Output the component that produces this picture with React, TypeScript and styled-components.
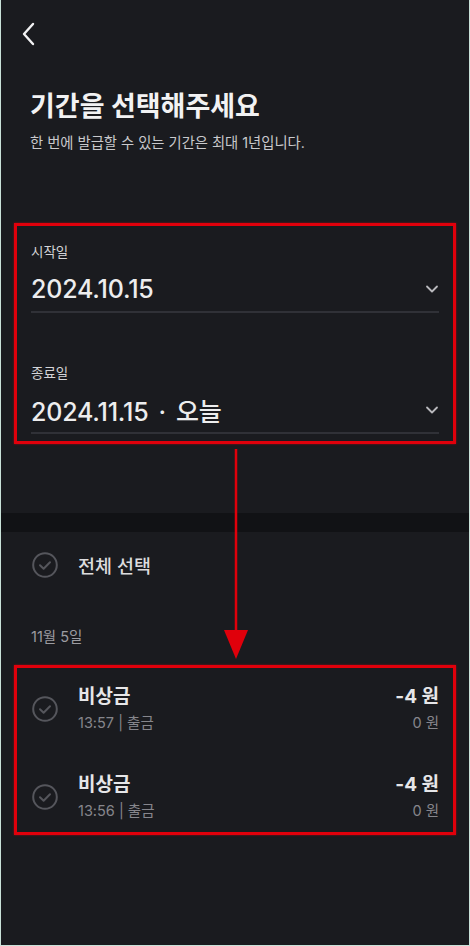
import React from 'react';
import styled, { createGlobalStyle } from 'styled-components';

const GlobalStyle = createGlobalStyle`
  html, body {
    margin: 0;
    padding: 0;
    background: #1a1b1f;
  }
  * {
    box-sizing: border-box;
  }
`;

const Screen = styled.div`
  position: relative;
  width: 470px;
  height: 946px;
  overflow: hidden;
  background: #1a1b1f;
  border-left: 1px solid #c9e2d9;
  border-right: 1px solid #c9e2d9;
  border-bottom: 1px solid #c9e2d9;
  font-family: Inter, 'Noto Sans CJK KR', 'Noto Sans', sans-serif;
  color: #ededee;
`;

const Header = styled.div`
  height: 70px;
  display: flex;
  align-items: center;
  padding-left: 17px;
  padding-bottom: 2px;
`;

const Intro = styled.div`
  padding: 22px 29px 0;
`;

const Title = styled.h1`
  margin: 0;
  font-size: 27px;
  line-height: 30px;
  font-weight: 700;
  color: #f2f2f3;
`;

const Subtitle = styled.p`
  margin: 12px 0 0;
  font-size: 14.3px;
  line-height: 18px;
  color: #c9c9cc;
`;

const Highlight = styled.div<{ $top: number }>`
  margin: ${({ $top }) => $top}px 13px 0;
  border: 3px solid #e0000b;
  box-shadow: 0 0 2px rgba(224, 0, 11, 0.6);
`;

const DateFields = styled.div`
  display: flex;
  flex-direction: column;
  gap: 51px;
  padding: 17px 14px 7px;
`;

const Field = styled.div`
  display: flex;
  flex-direction: column;
`;

const FieldLabel = styled.span`
  font-size: 13.5px;
  line-height: 18px;
  color: #d4d4d7;
`;

const FieldValue = styled.div`
  margin-top: 12px;
  height: 32px;
  display: flex;
  align-items: center;
  justify-content: space-between;
  font-size: 25px;
  font-weight: 500;
  letter-spacing: -0.2px;
  color: #ededee;
`;

const Dot = styled.span`
  margin: 0 10px;
`;

const Underline = styled.div`
  margin-top: 6px;
  height: 2px;
  background: #303137;
`;

const Band = styled.div`
  margin-top: 69px;
  height: 19px;
  background: #111215;
`;

const SelectAllRow = styled.div`
  height: 66px;
  display: flex;
  align-items: center;
  gap: 20px;
  padding-left: 31px;
  font-size: 18.5px;
  font-weight: 500;
  color: #dcdcde;
`;

const DayLabel = styled.div`
  margin-top: 30px;
  padding-left: 30px;
  font-size: 14.5px;
  line-height: 18px;
  color: #9c9ca1;
`;

const List = styled.div`
  display: flex;
  flex-direction: column;
  gap: 12px;
`;

const Item = styled.div`
  display: flex;
  align-items: center;
  padding: 17px 14px 12px 15px;
`;

const ItemText = styled.div`
  flex: 1;
  margin-left: 20px;
  display: flex;
  flex-direction: column;
  gap: 5px;
`;

const ItemAmounts = styled.div`
  display: flex;
  flex-direction: column;
  align-items: flex-end;
  gap: 5px;
`;

const Primary = styled.span`
  font-size: 19px;
  line-height: 24px;
  font-weight: 700;
  color: #e6e6e8;
`;

const Secondary = styled.span`
  font-size: 14.5px;
  line-height: 18px;
  color: #86868c;
`;

const Arrow = styled.svg`
  position: absolute;
  left: 223px;
  top: 449px;
`;

const BackIcon = () => (
  <svg width="22" height="26" viewBox="0 0 22 26">
    <polyline
      points="15,3 6,13 15,23"
      fill="none"
      stroke="#f2f2f3"
      strokeWidth="2.4"
      strokeLinecap="round"
      strokeLinejoin="round"
    />
  </svg>
);

const ChevronDown = () => (
  <svg width="14" height="10" viewBox="0 0 14 10">
    <polyline
      points="2,2.5 7,7.5 12,2.5"
      fill="none"
      stroke="#b9b9bd"
      strokeWidth="1.8"
      strokeLinecap="round"
      strokeLinejoin="round"
    />
  </svg>
);

const CheckCircle = () => (
  <svg width="26" height="26" viewBox="0 0 26 26">
    <circle cx="13" cy="13" r="11.8" fill="none" stroke="#55565c" strokeWidth="2" />
    <polyline
      points="8,13.3 11.6,16.8 18,10.2"
      fill="none"
      stroke="#55565c"
      strokeWidth="2"
      strokeLinecap="round"
      strokeLinejoin="round"
    />
  </svg>
);

const transactions = [
  { name: '비상금', time: '13:57', type: '출금', amount: '-4 원', balance: '0 원' },
  { name: '비상금', time: '13:56', type: '출금', amount: '-4 원', balance: '0 원' },
];

export const App: React.FC = () => {
  return (
    <>
      <GlobalStyle />
      <Screen>
        <Header>
          <BackIcon />
        </Header>
        <Intro>
          <Title>기간을 선택해주세요</Title>
          <Subtitle>한 번에 발급할 수 있는 기간은 최대 1년입니다.</Subtitle>
        </Intro>

        <Highlight $top={71}>
          <DateFields>
            <Field>
              <FieldLabel>시작일</FieldLabel>
              <FieldValue>
                <span>2024.10.15</span>
                <ChevronDown />
              </FieldValue>
              <Underline />
            </Field>
            <Field>
              <FieldLabel>종료일</FieldLabel>
              <FieldValue>
                <span>
                  2024.11.15<Dot>·</Dot>오늘
                </span>
                <ChevronDown />
              </FieldValue>
              <Underline />
            </Field>
          </DateFields>
        </Highlight>

        <Band />

        <SelectAllRow>
          <CheckCircle />
          <span>전체 선택</span>
        </SelectAllRow>

        <DayLabel>11월 5일</DayLabel>

        <Highlight $top={19}>
          <List>
            {transactions.map((t, i) => (
              <Item key={i}>
                <CheckCircle />
                <ItemText>
                  <Primary>{t.name}</Primary>
                  <Secondary>
                    {t.time} | {t.type}
                  </Secondary>
                </ItemText>
                <ItemAmounts>
                  <Primary>{t.amount}</Primary>
                  <Secondary>{t.balance}</Secondary>
                </ItemAmounts>
              </Item>
            ))}
          </List>
        </Highlight>

        <Arrow width="24" height="211" viewBox="0 0 24 211">
          <line x1="12" y1="0" x2="12" y2="186" stroke="#e0000b" strokeWidth="2.5" />
          <polygon points="0,181 24,181 12,210" fill="#e0000b" />
        </Arrow>
      </Screen>
    </>
  );
};

export default App;
